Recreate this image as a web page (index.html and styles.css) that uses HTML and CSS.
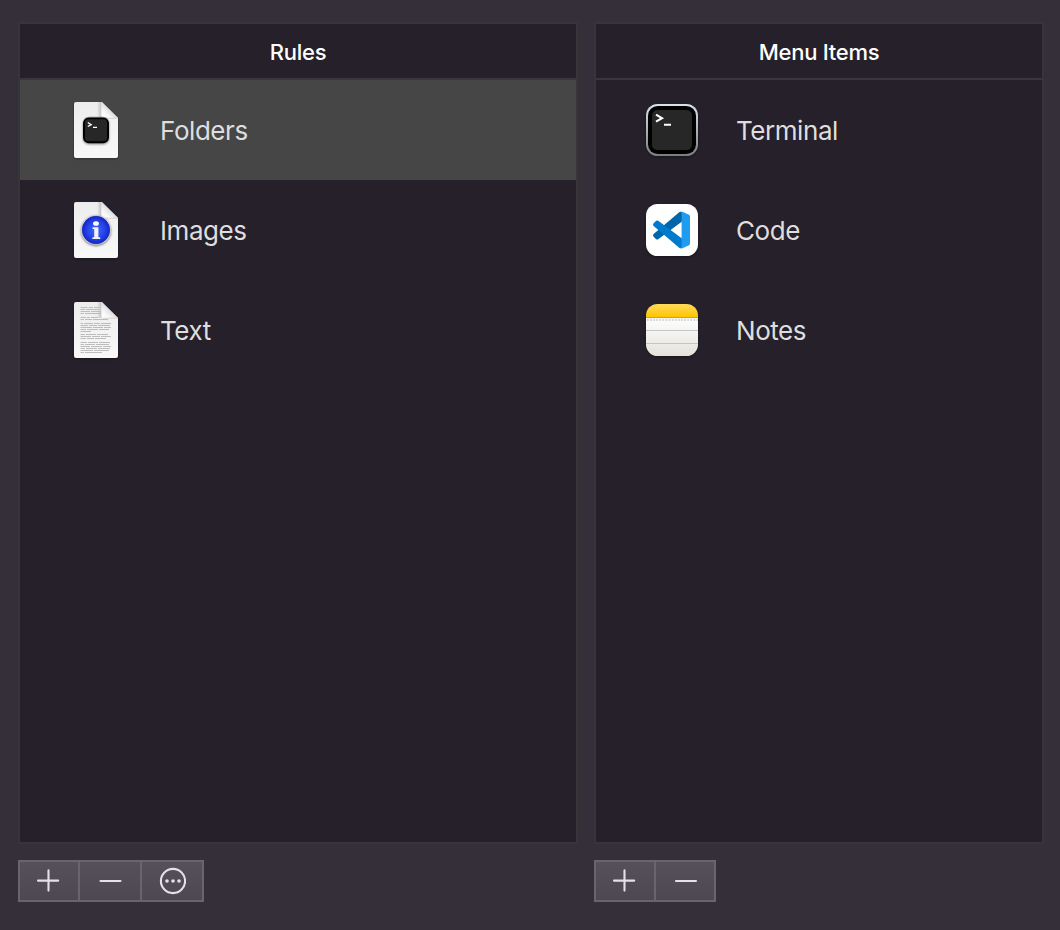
FILE: index.html
```html
<!DOCTYPE html>
<html lang="en">
<head>
<meta charset="utf-8">
<title>Rules</title>
<link rel="stylesheet" href="styles.css">
</head>
<body>
<svg class="defs" width="0" height="0" aria-hidden="true">
  <defs>
    <linearGradient id="paper" x1="0" y1="0" x2="0" y2="1"><stop offset="0" stop-color="#ededed"/><stop offset="1" stop-color="#f8f8f8"/></linearGradient>
    <linearGradient id="fold" x1="0" y1="1" x2="0.5" y2="0.5"><stop offset="0" stop-color="#ffffff"/><stop offset=".5" stop-color="#f8f8f8"/><stop offset="1" stop-color="#dedede"/></linearGradient>
    <linearGradient id="shade" x1="0" y1="0" x2="1" y2="0"><stop offset="0" stop-color="#000" stop-opacity="0"/><stop offset="1" stop-color="#000" stop-opacity=".2"/></linearGradient>
    <radialGradient id="blue" cx=".5" cy=".5" r=".5"><stop offset="0" stop-color="#4468f2"/><stop offset=".6" stop-color="#2547ea"/><stop offset="1" stop-color="#1626c9"/></radialGradient>
    <linearGradient id="rim" x1="0" y1="0" x2="0" y2="1"><stop offset="0" stop-color="#d5e4ee"/><stop offset=".5" stop-color="#a9b3ba"/><stop offset="1" stop-color="#7c7c7e"/></linearGradient>
    <linearGradient id="yellow" x1="0" y1="0" x2="0" y2="1"><stop offset="0" stop-color="#ffdb58"/><stop offset="1" stop-color="#ffc400"/></linearGradient>
    <linearGradient id="pad" x1="0" y1="0" x2="0" y2="1"><stop offset="0" stop-color="#fff"/><stop offset="1" stop-color="#e3e2da"/></linearGradient>
    <clipPath id="notepad"><rect x="4" y="4" width="52" height="52" rx="11.5"/></clipPath>
    <symbol id="page" viewBox="0 0 60 60">
      <path d="M10 2H36L52 18V56a2 2 0 0 1-2 2H10a2 2 0 0 1-2-2V4a2 2 0 0 1 2-2Z" fill="url(#paper)"/>
      <path d="M31 2H35.5V18H31Z" fill="url(#shade)"/>
      <path d="M35.5 2L52 18H37.5a2 2 0 0 1-2-2Z" fill="url(#fold)"/>
      <path d="M37 18.3H52" stroke="#cfcfcf" stroke-width=".8"/>
    </symbol>
  </defs>
</svg>
<main class="window">
  <section class="column column-rules">
    <div class="panel">
      <h2 class="heading">Rules</h2>
      <ul class="list">
        <li class="row selected">
          <svg class="icon" viewBox="0 0 60 60">
            <use href="#page"/>
            <rect class="soft" x="17" y="17.2" width="26" height="26" rx="6" fill="#000"/>
            <path d="M18 19.5Q19.5 17.2 23 17.2H37Q40.5 17.2 42 19.5" fill="none" stroke="#7b8b92" stroke-width=".6"/>
            <rect x="19" y="19.2" width="22" height="22" rx="3.5" fill="#272727"/>
            <path d="M21.8 22.5L25.2 24.6L21.8 26.5M27 27.3H31" fill="none" stroke="#fff" stroke-width="1.3"/>
          </svg>
          <span class="label">Folders</span>
        </li>
        <li class="row">
          <svg class="icon" viewBox="0 0 60 60">
            <use href="#page"/>
            <circle class="soft" cx="30" cy="30" r="15" fill="#cfd0d5"/>
            <circle cx="30" cy="30" r="13.7" fill="url(#blue)" stroke="#1425b8" stroke-width=".8"/>
            <ellipse cx="30" cy="23.5" rx="2.9" ry="2.3" fill="#fff"/>
            <path d="M26.6 27.2H32.4V37.2H34.2V39H26.4V37.2H28.2V29H26.6Z" fill="#f2f2f5"/>
          </svg>
          <span class="label">Images</span>
        </li>
        <li class="row">
          <svg class="icon" viewBox="0 0 60 60">
            <use href="#page"/>
            <g class="print">
              <path d="M14.5 7.5H21.5M22.5 7.5H27M28 7.5H34M14.5 9.5H19M20 9.5H33M14.5 11.5H24M25 11.5H34M14.5 13.5H18M19 13.5H35"/>
              <path d="M14.5 17.5H20M21 17.5H24M25 17.5H32M14.5 19.5H18M19 19.5H26M27 19.5H42"/>
              <path d="M14.5 23.5H17M18 23.5H27M28 23.5H34M35 23.5H45M14.5 25.5H22M23 25.5H31M32 25.5H44M14.5 27.5H26M27 27.5H37M38 27.5H45M14.5 29.5H20M21 29.5H32M33 29.5H43M14.5 31.5H25"/>
              <path d="M14.5 34.5H19M20 34.5H30M31 34.5H42M14.5 36.5H25M26 36.5H34M35 36.5H45M14.5 38.5H20M21 38.5H28M29 38.5H40"/>
              <path d="M14.5 42.5H21M22 42.5H32M33 42.5H44M14.5 44.5H18M19 44.5H29M30 44.5H43M14.5 46.5H24M25 46.5H36M37 46.5H45M14.5 48.5H19M20 48.5H31M32 48.5H44M14.5 50.5H27M28 50.5H43M14.5 52.5H18M19 52.5H36"/>
            </g>
          </svg>
          <span class="label">Text</span>
        </li>
      </ul>
    </div>
    <div class="controls">
      <button class="control" aria-label="Add"><svg class="glyph" viewBox="0 0 28 28"><path d="M3 13.6H23.2M13.5 3.4V23.6"/></svg></button>
      <button class="control wide" aria-label="Remove"><svg class="glyph" viewBox="0 0 28 28"><path d="M4.5 14H24.5"/></svg></button>
      <button class="control wide" aria-label="More"><svg class="glyph" viewBox="0 0 28 28"><circle cx="15" cy="14" r="12.1"/><g class="dots"><circle cx="9" cy="14" r="1.8"/><circle cx="15" cy="14" r="1.8"/><circle cx="21" cy="14" r="1.8"/></g></svg></button>
    </div>
  </section>
  <section class="column column-items">
    <div class="panel">
      <h2 class="heading">Menu Items</h2>
      <ul class="list">
        <li class="row">
          <svg class="icon" viewBox="0 0 60 60">
            <rect x="4" y="4" width="52" height="52" rx="11.5" fill="url(#rim)"/>
            <rect x="6" y="6" width="48" height="48" rx="9.8" fill="#000"/>
            <rect x="10" y="10" width="40" height="40" rx="5.5" fill="#272727"/>
            <path d="M14 14.7L20 18.2L14 21.7M22 24.8H29" fill="none" stroke="#fff" stroke-width="2.1"/>
          </svg>
          <span class="label">Terminal</span>
        </li>
        <li class="row">
          <svg class="icon" viewBox="0 0 60 60">
            <rect x="4" y="4" width="52" height="52" rx="11.5" fill="#fff"/>
            <path d="M11.6 34L37.5 12L40 11.8V21.6L16.2 39.2Q15.2 40 14.2 39.2L11.6 36.8Q10.4 35.3 11.6 34Z" fill="#0065a9"/>
            <path d="M11.6 26L37.5 48L40 48.2V38.4L16.2 20.8Q15.2 20 14.2 20.8L11.6 23.2Q10.4 24.7 11.6 26Z" fill="#007acc"/>
            <path d="M38.3 48.2Q39.6 47.6 39.6 46V14Q39.6 12.4 38.3 11.8Q39.5 11.4 41 12L47 14.8Q48 15.4 48 16.5V43.5Q48 44.6 47 45.2L41 48Q39.5 48.7 38.3 48.2Z" fill="#1f9cf0"/>
          </svg>
          <span class="label">Code</span>
        </li>
        <li class="row">
          <svg class="icon" viewBox="0 0 60 60">
            <g clip-path="url(#notepad)">
              <path d="M4 17H56V56H4Z" fill="url(#pad)"/>
              <path d="M4 4H56V17.5H4Z" fill="url(#yellow)"/>
              <path d="M4 17.6H56" stroke="#a39a7c" stroke-width="1"/>
              <path d="M5 20H56" stroke="#c6c6c9" stroke-width="1.7" stroke-dasharray="1.7 1.4"/>
              <path d="M4 30.5H56M4 43.5H56" stroke="#c5c5ca" stroke-width="1"/>
            </g>
          </svg>
          <span class="label">Notes</span>
        </li>
      </ul>
    </div>
    <div class="controls">
      <button class="control" aria-label="Add"><svg class="glyph" viewBox="0 0 28 28"><path d="M3 13.6H23.2M13.5 3.4V23.6"/></svg></button>
      <button class="control" aria-label="Remove"><svg class="glyph" viewBox="0 0 28 28"><path d="M5 14H25"/></svg></button>
    </div>
  </section>
</main>
</body>
</html>
```
FILE: styles.css
```css
* { box-sizing: border-box; }

body {
  margin: 0;
  background: #352f3a;
  font-family: Inter, "Liberation Sans", sans-serif;
}

.defs { position: absolute; }

.window {
  display: flex;
  gap: 16px;
  height: 930px;
  padding: 22px 16px 28px 18px;
}

.column {
  display: flex;
  flex-direction: column;
  gap: 16px;
}

.column-rules { width: 560px; }
.column-items { width: 450px; }

.panel {
  flex: 1;
  border: 2px solid #363537;
  background: #25202a;
}

.heading {
  height: 56px;
  margin: 0;
  border-bottom: 2px solid #3b3540;
  color: #fff;
  font-size: 22px;
  font-weight: 550;
  line-height: 56px;
  text-align: center;
  letter-spacing: -0.27px;
}

.list {
  margin: 0;
  padding: 0;
  list-style: none;
}

.row {
  display: flex;
  align-items: center;
  gap: 34px;
  height: 100px;
  padding-left: 46px;
}

.selected { background: #464646; }

.icon {
  width: 60px;
  height: 60px;
  overflow: visible;
  filter: drop-shadow(0 1px 1px rgba(0, 0, 0, .35));
}

.soft { filter: drop-shadow(0 1px 1px rgba(0, 0, 0, .5)); }

.print {
  fill: none;
  stroke: #bcbcbc;
  stroke-width: 1.1;
}

.label {
  color: #dfdedf;
  font-size: 26px;
  font-weight: 430;
  line-height: 32px;
  letter-spacing: -0.44px;
  padding-top: 2px;
}

.controls {
  display: flex;
  align-self: flex-start;
  height: 42px;
  border: 2px solid #6a646e;
  background: linear-gradient(#56505a, #4e4852);
}

.control {
  display: flex;
  align-items: center;
  justify-content: center;
  width: 58px;
  padding: 0;
  border: 0;
  background: none;
}

.control + .control {
  width: 60px;
  border-left: 2px solid #6a646e;
}

.control + .wide { width: 62px; }

.glyph {
  width: 28px;
  height: 28px;
  fill: none;
  stroke: #e3e2e4;
  stroke-width: 2.1;
  stroke-linecap: round;
}

.dots {
  fill: #e3e2e4;
  stroke: none;
}
```
